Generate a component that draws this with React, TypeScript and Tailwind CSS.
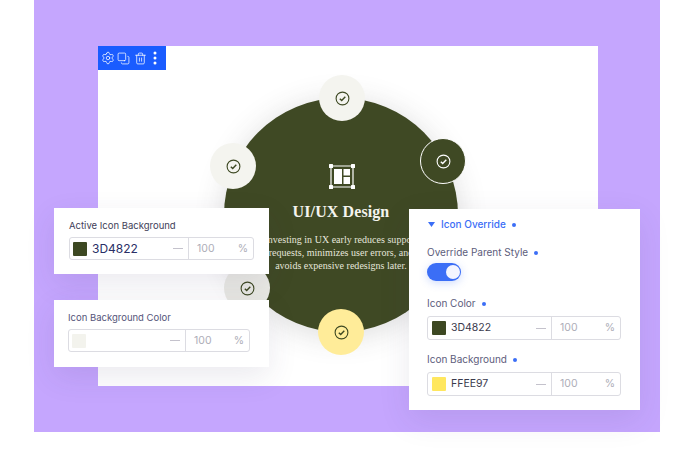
import React from "react";
import { Settings, Copy, Trash2 } from "lucide-react";

const Check = ({ color = "#3d4822" }: { color?: string }) => (
  <svg width="15" height="15" viewBox="0 0 15 15" fill="none" stroke={color}>
    <circle cx="7.5" cy="7.5" r="6.4" strokeWidth="1.1" />
    <path d="M4.8 7.8 L6.7 9.6 L10.3 5.8" strokeWidth="1.4" />
  </svg>
);

const Node = ({ cls, color }: { cls: string; color?: string }) => (
  <div className={`absolute w-[46px] h-[46px] rounded-full flex items-center justify-center ${cls}`}>
    <Check color={color} />
  </div>
);

const Dot = () => <span className="inline-block w-[4px] h-[4px] rounded-full bg-[#3b6ef6] ml-[6px] align-middle" />;

const Field = ({ swatch, value, large, cls, h = "h-[23px]", right = "w-[64px]", pad = "pl-[3px]" }: { swatch: string; value: string; large?: boolean; cls: string; h?: string; right?: string; pad?: string }) => (
  <div className={`flex ${h} rounded-[3px] border border-[#dcdce2] bg-white ${cls}`}>
    <div className={`flex-1 flex items-center pr-[5px] ${pad}`}>
      <span className="w-[14px] h-[14px] rounded-[1px] mr-[5px]" style={{ background: swatch }} />
      <span className={`${large ? "text-[12px] text-[#2a2f66]" : "text-[10.5px] text-[#3a3a4c]"}`}>{value}</span>
      <span className="ml-auto w-[10px] h-px bg-[#c4c2cc]" />
    </div>
    <div className={`flex items-center justify-between border-l border-[#dcdce2] pl-[8px] pr-[5px] text-[#aeaeb8] text-[10.5px] ${right}`}>
      <span>100</span>
      <span>%</span>
    </div>
  </div>
);

export default function App() {
  return (
    <div className="w-[687px] h-[465px] bg-white overflow-hidden font-['Inter',sans-serif]">
      <div className="ml-[34px] w-[626px] h-[432px] bg-[#c5a6fe] pt-[46px] pl-[64px] relative">
        <div className="relative w-[500px] h-[340px] bg-white overflow-visible">
          <div className="bg-[#1a5cff] w-[68px] h-[24px] flex items-center pl-[3px] text-white">
            <Settings size={14} strokeWidth={1.3} />
            <Copy size={13} strokeWidth={1.4} className="ml-[2px] -scale-x-100 -scale-y-100" />
            <Trash2 size={13} strokeWidth={1.4} className="ml-[4px]" />
            <svg width="4" height="14" viewBox="0 0 4 14" className="ml-[6px]" fill="white">
              <circle cx="2" cy="2" r="1.5" />
              <circle cx="2" cy="7" r="1.5" />
              <circle cx="2" cy="12" r="1.5" />
            </svg>
          </div>

          <div className="absolute left-[126px] top-[52px] w-[234px] h-[234px] rounded-full bg-[#3f4924] shadow-[0_4px_30px_rgba(60,60,60,0.18)] flex flex-col items-center text-center text-white font-['Liberation_Serif',serif]">
            <svg width="26" height="25" viewBox="0 0 26 25" className="mt-[66px] ml-[2px]" fill="white">
              <path d="M2 2h22v21H2z" fill="none" stroke="white" strokeWidth="1.2" />
              <rect x="0" y="0" width="4" height="4" rx="0.5" />
              <rect x="22" y="0" width="4" height="4" rx="0.5" />
              <rect x="0" y="21" width="4" height="4" rx="0.5" />
              <rect x="22" y="21" width="4" height="4" rx="0.5" />
              <rect x="5" y="5" width="8" height="15" />
              <rect x="14.5" y="5" width="6.5" height="6.5" />
              <rect x="14.5" y="13" width="6.5" height="7" />
            </svg>
            <div className="mt-[11px] text-[16px] leading-[24px] font-bold tracking-[0.1px] text-[#f4f4ee]">UI/UX Design</div>
            <div className="mt-[9px] text-[10px] leading-[13px] text-[#e6e7dc] tracking-[0.02px] whitespace-nowrap">
              <div>Investing in UX early reduces support</div>
              <div>requests, minimizes user errors, and</div>
              <div>avoids expensive redesigns later.</div>
            </div>
          </div>

          <Node cls="left-[221px] top-[29px] bg-[#f4f4ef]" />
          <Node cls="left-[112px] top-[97px] bg-[#f4f4ef]" />
          <Node cls="left-[322px] top-[92px] bg-[#3f4924] border border-white" color="#ffffff" />
          <Node cls="left-[126px] top-[219px] bg-[#e9e9e4]" />
          <Node cls="left-[220px] top-[263px] bg-[#ffec99]" />

          <div className="absolute left-[-44px] top-[162px] w-[215px] h-[66px] bg-white pt-[11px] px-[15px] shadow-[0_10px_30px_rgba(60,50,100,0.1)]">
            <div className="text-[9.5px] leading-[13px] text-[#3e3e58]">Active Icon Background</div>
            <Field swatch="#3d4822" value="3D4822" large cls="mt-[5px] w-[185px]" right="w-[65px]" />
          </div>

          <div className="absolute left-[-44px] top-[254px] w-[215px] h-[67px] bg-white pt-[11px] px-[14px] shadow-[0_10px_30px_rgba(60,50,100,0.1)]">
            <div className="text-[9.5px] leading-[13px] text-[#55557a]">Icon Background Color</div>
            <Field swatch="#f3f3ed" value="" cls="mt-[5px] w-[182px]" />
          </div>

          <div className="absolute left-[311px] top-[163px] w-[231px] h-[201px] bg-white px-[18px] pt-[9px] shadow-[0_10px_30px_rgba(60,50,100,0.1)]">
            <div className="flex items-center text-[10px] leading-[13px] text-[#3b6ef6]">
              <svg width="7" height="5" viewBox="0 0 7 5" className="ml-[1px]" fill="#3b6ef6"><path d="M0 0h7L3.5 5z" /></svg>
              <span className="ml-[6px] font-medium">Icon Override</span>
              <Dot />
            </div>
            <div className="mt-[15px] text-[10px] leading-[13px] text-[#5d5d7c]">Override Parent Style<Dot /></div>
            <div className="mt-[4px] w-[34px] h-[18px] rounded-full bg-[#3b6ef6] relative shadow-[0_2px_8px_rgba(59,110,246,0.25)]">
              <div className="absolute right-[1px] top-[2px] w-[14px] h-[14px] rounded-full bg-[#f3f5ff]" />
            </div>
            <div className="mt-[16px] text-[10px] leading-[13px] text-[#5d5d7c]">Icon Color<Dot /></div>
            <Field swatch="#3d4822" value="3D4822" h="h-[24px]" cls="mt-[6px] w-[194px]" right="w-[69px]" pad="pl-[4px]" />
            <div className="mt-[13px] text-[10px] leading-[13px] text-[#5d5d7c]">Icon Background<Dot /></div>
            <Field swatch="#ffe75f" value="FFEE97" h="h-[24px]" cls="mt-[6px] w-[194px]" right="w-[69px]" pad="pl-[4px]" />
          </div>
        </div>
      </div>
    </div>
  );
}
